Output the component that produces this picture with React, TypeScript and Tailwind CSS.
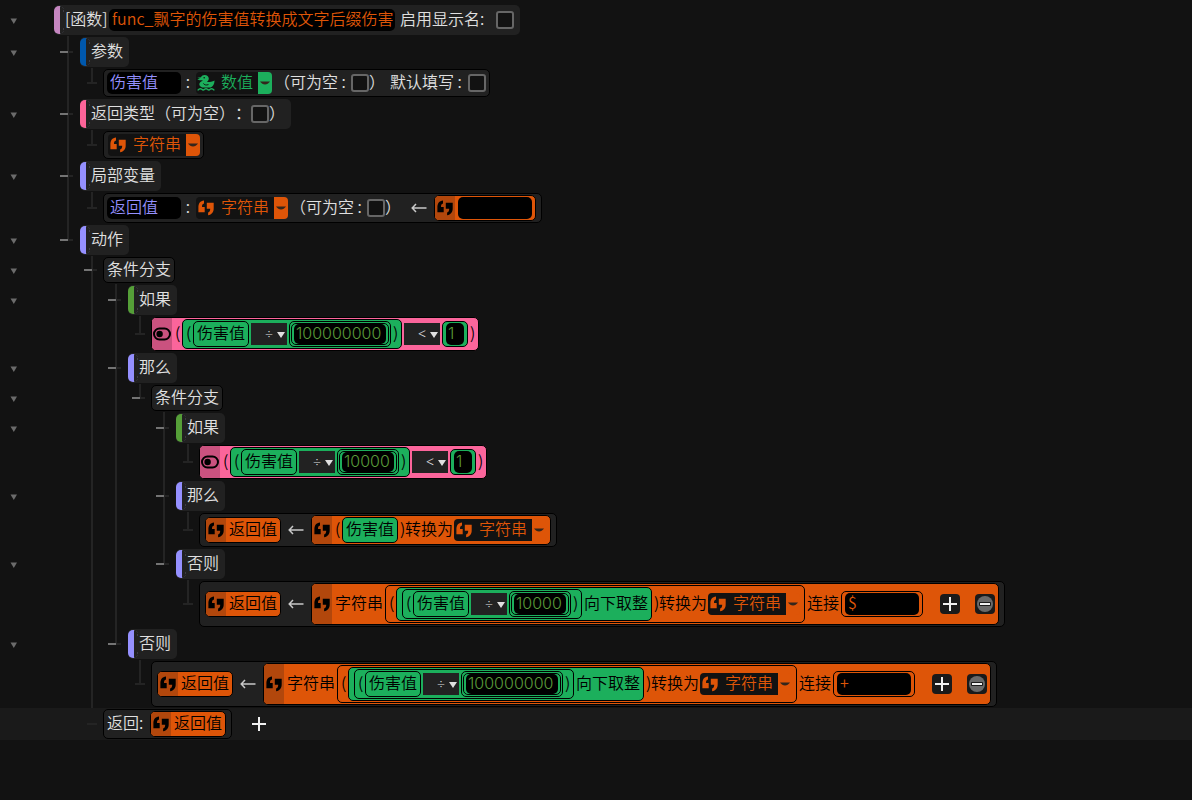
import type { ReactNode } from "react";

type Guide = "blank" | "pass" | "leafEnd" | "node" | "nodeEnd" | "dash";

const verticalStyle: Record<Guide, string> = {
  blank: "hidden",
  pass: "h-full",
  leafEnd: "h-1/2",
  node: "h-full",
  nodeEnd: "h-1/2",
  dash: "hidden",
};

function GuideCell({ kind }: { kind: Guide }) {
  const isNode = kind === "node" || kind === "nodeEnd";
  const hasDash = kind !== "blank" && kind !== "pass";
  return (
    <span aria-hidden="true" className="grid w-6 shrink-0 self-stretch">
      <span className={`col-start-1 row-start-1 ml-[11px] w-0.5 bg-[#242424] ${verticalStyle[kind]}`} />
      {hasDash && <span className="col-start-1 row-start-1 ml-[7px] h-0.5 w-2.5 self-center bg-[#242424]" />}
      {isNode && <span className="col-start-1 row-start-1 ml-1 h-0.5 w-2 self-center bg-[#747474]" />}
    </span>
  );
}

function Row({ guides = [], toggle = false, root = false, active = false, children }: {
  guides?: Guide[];
  toggle?: boolean;
  root?: boolean;
  active?: boolean;
  children: ReactNode;
}) {
  return (
    <div role="treeitem" className={`flex items-center ${active ? "bg-[#1a1a1a]" : ""}`}>
      <div className={`flex shrink-0 justify-start pl-2 ${root ? "w-[54px]" : "w-14"}`}>
        {toggle && (
          <button type="button" aria-label="折叠" className="flex h-4 w-3 items-center justify-center">
            <svg width="8" height="6" viewBox="0 0 8 6" className="mt-px fill-[#6b6b6b]">
              <path d="M0.5 0.5h6.500L3.800 6z" />
            </svg>
          </button>
        )}
      </div>
      {guides.map((g, i) => (
        <GuideCell key={i} kind={g} />
      ))}
      {children}
    </div>
  );
}

function T({ className = "", children }: { className?: string; children: ReactNode }) {
  return <span className={`block shrink-0 pb-1 leading-[18px] whitespace-pre ${className}`}>{children}</span>;
}

function Paren({ children }: { children: string }) {
  return <T className="w-[5px]">{children}</T>;
}

function Section({ bar, children }: { bar: string; children: ReactNode }) {
  return (
    <div className="my-px flex h-[30px] items-center rounded-[5px] bg-[#212121] pr-1.5 text-[#e0e0e0]">
      <span className={`h-[28px] w-1.5 rounded-l-[5px] ${bar}`} />
      <svg width="5" height="28" viewBox="0 0 5 28" fill="none" stroke="#3c3c44" className="shrink-0" aria-hidden="true">
        <path d="M0 .5h1M2.500 1.500l1 1M3.500 4v2M3.500 22v2M2.500 26.500l1-1M0 27.500h1" />
      </svg>
      {children}
    </div>
  );
}

function Box({ tall = false, children }: { tall?: boolean; children: ReactNode }) {
  return (
    <div className={`my-px -ml-px flex items-center rounded-[5px] border border-black bg-[#212121] px-[3px] py-px text-[#e0e0e0] ${tall ? "min-h-7" : ""}`}>
      {children}
    </div>
  );
}

const slotTones = {
  green: "bg-[#1caf5c]",
  orange: "bg-[#de5508]",
  pink: "bg-[#fb659b]",
};

const iconTones = {
  green: "bg-[#178c4a]",
  orange: "bg-[#b2470c]",
  pink: "bg-[#ca527f]",
};

function Slot({ tone, icon, children }: {
  tone: keyof typeof slotTones;
  icon?: ReactNode;
  children: ReactNode;
}) {
  return (
    <div className={`mx-0.5 flex items-center rounded-[5px] border border-black text-black ${slotTones[tone]}`}>
      {icon && (
        <span className={`flex w-5 items-center justify-center self-stretch rounded-l-[4px] ${iconTones[tone]}`}>{icon}</span>
      )}
      <div className="flex items-center px-[3px] py-px">{children}</div>
    </div>
  );
}

function QuoteIcon() {
  return (
    <svg width="16" height="16" viewBox="0 0 16 16" fill="currentColor" aria-hidden="true">
      <path d="M6 .6v3C4.500 4 4 5 4 7h2.700v5.200H.4V7.400C.4 3.500 2.200 1 6 .6z" />
      <path d="M15.700 2.800v5.400c0 4-2 6.400-5.600 7v-2.800c1.500-.5 2.100-1.700 2.100-3.700H8.800V2.800z" />
    </svg>
  );
}

function SwitchIcon() {
  return (
    <svg width="18" height="14" viewBox="0 0 18 14" aria-hidden="true">
      <rect x="1" y="1.500" width="16" height="11" rx="5.500" fill="none" stroke="black" strokeWidth="2" />
      <circle cx="6.600" cy="7" r="3.200" fill="black" />
    </svg>
  );
}

function DuckIcon() {
  return (
    <svg width="18" height="16" viewBox="0 0 18 16" fill="currentColor" className="-ml-px" aria-hidden="true">
      <path d="M.4 2.800 4 2.200C4.600.8 6 0 7.600 0 10 0 11.800 1.500 11.800 3.600c0 1.100-.5 2-1.200 2.700l-.6.7c1.600.4 4.800-.4 7.600-1.600-.2 3.600-1.600 6.200-4 7.100H5.200C3.200 11.800 2.200 10.500 2.300 9c.2-1.700 1.800-2.500 3.700-3.300L4.600 5.200C2.800 5.400 1.200 5 .4 4.200L3 3.700z" />
      <path d="M.6 15c1.400 0 1.400-1.300 2.800-1.300S4.800 15 6.200 15s1.400-1.300 2.800-1.300 1.400 1.300 2.800 1.300 1.400-1.300 2.800-1.300S16 15 17.400 15" fill="none" stroke="currentColor" strokeWidth="1.400" />
      <path d="M6.500 8.400c.6 1.600 2.600 2 5 1.200" fill="none" stroke="#121212" strokeWidth="1" />
      <circle cx="7.200" cy="2.700" r=".8" fill="#121212" />
    </svg>
  );
}

const typeTones = {
  green: { text: "text-[#1caf5c]", button: "bg-[#1caf5c]" },
  orange: { text: "text-[#de5508]", button: "bg-[#de5508]" },
};

function TypeSelect({ tone, icon, value }: { tone: keyof typeof typeTones; icon: ReactNode; value: string }) {
  return (
    <label className={`ml-px flex h-[22px] items-stretch ${typeTones[tone].text}`}>
      <span className="flex items-center rounded-l-[4px] bg-[#121212] pr-1 pl-0.5">
        <span className="flex w-[23px] items-center">{icon}</span>
        <select aria-label="类型" className="block appearance-none bg-transparent pb-1 leading-[18px]">
          <option>{value}</option>
        </select>
      </span>
      <span className={`flex w-3.5 items-center justify-center rounded-r-[4px] ${typeTones[tone].button}`}>
        <svg width="10" height="4" viewBox="0 0 10 4" aria-hidden="true">
          <path d="M0 0.5h10C8.500 2.600 7 3.500 5 3.500S1.500 2.600 0 .5z" fill="#33261c" />
        </svg>
      </span>
    </label>
  );
}

function Operator({ value }: { value: string }) {
  return (
    <label className="grid h-[22px] w-9 items-center bg-[#222222] text-[#e0e0e0]">
      <select aria-label="运算符" className="col-start-1 row-start-1 w-full appearance-none bg-transparent pl-3.5 font-['Noto_Sans'] text-sm leading-5">
        <option>{value}</option>
      </select>
      <svg width="8" height="6" viewBox="0 0 8 6" className="pointer-events-none col-start-1 row-start-1 mt-0.5 mr-0.5 justify-self-end fill-current" aria-hidden="true">
        <path d="M0 0h8L4 6z" />
      </svg>
    </label>
  );
}

function Field({ label, value, className }: { label: string; value: string; className: string }) {
  return (
    <input aria-label={label} defaultValue={value} className={`block rounded-[5px] bg-black outline-none ${className}`} />
  );
}

const textField = "h-[22px] pb-1 pl-[3px] leading-[18px]";
const numberField = "pl-0.5 font-[Inter] font-light text-[#5a9c3a]";

function Check({ label }: { label: string }) {
  return (
    <input type="checkbox" aria-label={label} className="size-[18px] shrink-0 appearance-none rounded-[3px] border-2 border-[#666666] bg-[#121212]" />
  );
}

function Num({ value, width }: { value: string; width: string }) {
  return (
    <div className="mx-0.5 rounded-[5px] border border-black bg-[#1caf5c] p-px">
      <div className="rounded-[5px] border border-black bg-[#1caf5c] px-0.5">
        <Field label="数值" value={value} className={`h-5 pb-0.5 leading-[18px] ${numberField} ${width}`} />
      </div>
    </div>
  );
}

const quote = <QuoteIcon />;

function Variable({ name }: { name: string }) {
  return (
    <Slot tone="green">
      <T>{name}</T>
    </Slot>
  );
}

function ReturnValue() {
  return (
    <Slot tone="orange" icon={quote}>
      <T>返回值</T>
    </Slot>
  );
}

function Arrow() {
  return (
    <span className="flex w-[26px] justify-center">
      <svg width="16" height="10" viewBox="0 0 16 10" fill="none" stroke="#c8c8c8" strokeWidth="1.500" className="-mt-px" aria-label="赋值">
        <path d="M15.500 5H1.500M5 1 1.200 5 5 9" />
      </svg>
    </span>
  );
}

function Division({ divisor, width }: { divisor: string; width: string }) {
  return (
    <Slot tone="green">
      <Paren>(</Paren>
      <Variable name="伤害值" />
      <Operator value="÷" />
      <Num value={divisor} width={width} />
      <Paren>)</Paren>
    </Slot>
  );
}

function Condition({ divisor, width }: { divisor: string; width: string }) {
  return (
    <div className="my-px -ml-[3px] flex">
      <Slot tone="pink" icon={<SwitchIcon />}>
        <Paren>(</Paren>
        <Division divisor={divisor} width={width} />
        <Operator value="<" />
        <Slot tone="green">
          <Field label="比较值" value="1" className={`h-[22px] w-[18px] pb-0.5 leading-5 ${numberField}`} />
        </Slot>
        <Paren>)</Paren>
      </Slot>
    </div>
  );
}

function ConvertSuffix() {
  return (
    <>
      <Paren>)</Paren>
      <T>转换为</T>
      <TypeSelect tone="orange" icon={quote} value="字符串" />
      <span className="w-px" />
    </>
  );
}

function PlusGlyph() {
  return (
    <svg width="16" height="16" viewBox="0 0 16 16" stroke="#f0f0f0" strokeWidth="2" aria-hidden="true">
      <path d="M8 1v14M1 8h14" />
    </svg>
  );
}

function JoinStatement({ divisor, width, suffix }: { divisor: string; width: string; suffix: string }) {
  return (
    <Box>
      <ReturnValue />
      <Arrow />
      <Slot tone="orange" icon={quote}>
        <T>字符串</T>
        <Slot tone="orange">
          <Paren>(</Paren>
          <Slot tone="green">
            <Division divisor={divisor} width={width} />
            <T>向下取整</T>
          </Slot>
          <ConvertSuffix />
        </Slot>
        <T>连接</T>
        <Slot tone="orange">
          <Field label="后缀" value={suffix} className={`w-[74px] text-[#de5508] ${textField}`} />
        </Slot>
        <button type="button" aria-label="添加" className="ml-[15px] flex size-5 items-center justify-center rounded-[4px] bg-[#1a1a1a]">
          <PlusGlyph />
        </button>
        <button type="button" aria-label="移除" className="ml-[15px] flex size-5 items-center justify-center rounded-[4px] bg-[#1a1a1a]">
          <svg width="18" height="18" viewBox="0 0 18 18" aria-hidden="true">
            <circle cx="9" cy="9" r="8" fill="#6a6a6a" />
            <rect x="3" y="7" width="12" height="4" rx="1" fill="#1a1a1a" />
            <path d="M4 9h10" stroke="#f0f0f0" strokeWidth="2" />
          </svg>
        </button>
      </Slot>
    </Box>
  );
}

export default function App() {
  return (
    <main className="min-h-screen overflow-hidden bg-[#121212] pt-1 font-['Noto_Sans_CJK_SC','Noto_Sans',sans-serif] text-base font-[350] [text-spacing-trim:space-all]">
      <div role="tree">
        <Row toggle root>
          <Section bar="bg-[#c586c0]">
            <T className="w-11">[函数]</T>
            <Field label="函数名" value="func_飘字的伤害值转换成文字后缀伤害" className={`w-[286px] text-[#de5508] ${textField}`} />
            <T className="ml-[5px] w-24">启用显示名:</T>
            <Check label="启用显示名" />
          </Section>
        </Row>
        <Row toggle guides={["node"]}>
          <Section bar="bg-[#0058ad]">
            <T>参数</T>
          </Section>
        </Row>
        <Row guides={["pass", "leafEnd"]}>
          <Box tall>
            <Field label="参数名" value="伤害值" className={`w-[74px] text-[#9590ff] ${textField}`} />
            <T className="w-3.5 text-center">:</T>
            <TypeSelect tone="green" icon={<DuckIcon />} value="数值" />
            <T className="ml-0.5 w-[77px]">（可为空 :</T>
            <Check label="可为空" />
            <T className="w-[21px]">）</T>
            <T className="w-[78px]">默认填写 :</T>
            <Check label="默认填写" />
          </Box>
        </Row>
        <Row toggle guides={["node"]}>
          <Section bar="bg-[#fd6499]">
            <T>返回类型（可为空）：</T>
            <Check label="返回类型可为空" />
            <T>）</T>
          </Section>
        </Row>
        <Row guides={["pass", "leafEnd"]}>
          <Box tall>
            <TypeSelect tone="orange" icon={quote} value="字符串" />
          </Box>
        </Row>
        <Row toggle guides={["node"]}>
          <Section bar="bg-[#9590ff]">
            <T>局部变量</T>
          </Section>
        </Row>
        <Row guides={["pass", "leafEnd"]}>
          <Box tall>
            <Field label="变量名" value="返回值" className={`w-[74px] text-[#9590ff] ${textField}`} />
            <T className="w-3.5 text-center">:</T>
            <TypeSelect tone="orange" icon={quote} value="字符串" />
            <T className="ml-0.5 w-[77px]">（可为空 :</T>
            <Check label="可为空" />
            <T className="w-[21px]">）</T>
            <Arrow />
            <Slot tone="orange" icon={quote}>
              <Field label="初始值" value="" className={`w-[74px] text-[#de5508] ${textField}`} />
            </Slot>
          </Box>
        </Row>
        <Row toggle guides={["nodeEnd"]}>
          <Section bar="bg-[#9590ff]">
            <T>动作</T>
          </Section>
        </Row>
        <Row toggle guides={["blank", "node"]}>
          <Box>
            <T>条件分支</T>
          </Box>
        </Row>
        <Row toggle guides={["blank", "pass", "node"]}>
          <Section bar="bg-[#559f38]">
            <T>如果</T>
          </Section>
        </Row>
        <Row guides={["blank", "pass", "pass", "leafEnd"]}>
          <Condition divisor="100000000" width="w-[92px]" />
        </Row>
        <Row toggle guides={["blank", "pass", "node"]}>
          <Section bar="bg-[#9590ff]">
            <T>那么</T>
          </Section>
        </Row>
        <Row toggle guides={["blank", "pass", "pass", "nodeEnd"]}>
          <Box>
            <T>条件分支</T>
          </Box>
        </Row>
        <Row toggle guides={["blank", "pass", "pass", "blank", "node"]}>
          <Section bar="bg-[#559f38]">
            <T>如果</T>
          </Section>
        </Row>
        <Row guides={["blank", "pass", "pass", "blank", "pass", "leafEnd"]}>
          <Condition divisor="10000" width="w-[52px]" />
        </Row>
        <Row toggle guides={["blank", "pass", "pass", "blank", "node"]}>
          <Section bar="bg-[#9590ff]">
            <T>那么</T>
          </Section>
        </Row>
        <Row guides={["blank", "pass", "pass", "blank", "pass", "leafEnd"]}>
          <Box>
            <ReturnValue />
            <Arrow />
            <Slot tone="orange" icon={quote}>
              <Paren>(</Paren>
              <Variable name="伤害值" />
              <ConvertSuffix />
            </Slot>
          </Box>
        </Row>
        <Row toggle guides={["blank", "pass", "pass", "blank", "nodeEnd"]}>
          <Section bar="bg-[#9590ff]">
            <T>否则</T>
          </Section>
        </Row>
        <Row guides={["blank", "pass", "pass", "blank", "blank", "leafEnd"]}>
          <JoinStatement divisor="10000" width="w-[52px]" suffix="$" />
        </Row>
        <Row toggle guides={["blank", "pass", "nodeEnd"]}>
          <Section bar="bg-[#9590ff]">
            <T>否则</T>
          </Section>
        </Row>
        <Row guides={["blank", "pass", "blank", "leafEnd"]}>
          <JoinStatement divisor="100000000" width="w-[92px]" suffix="+" />
        </Row>
        <Row active guides={["blank", "dash"]}>
          <Box>
            <T className="w-[41px]">返回:</T>
            <ReturnValue />
          </Box>
          <button type="button" aria-label="添加返回值" className="ml-[18px] p-px">
            <PlusGlyph />
          </button>
        </Row>
      </div>
    </main>
  );
}
